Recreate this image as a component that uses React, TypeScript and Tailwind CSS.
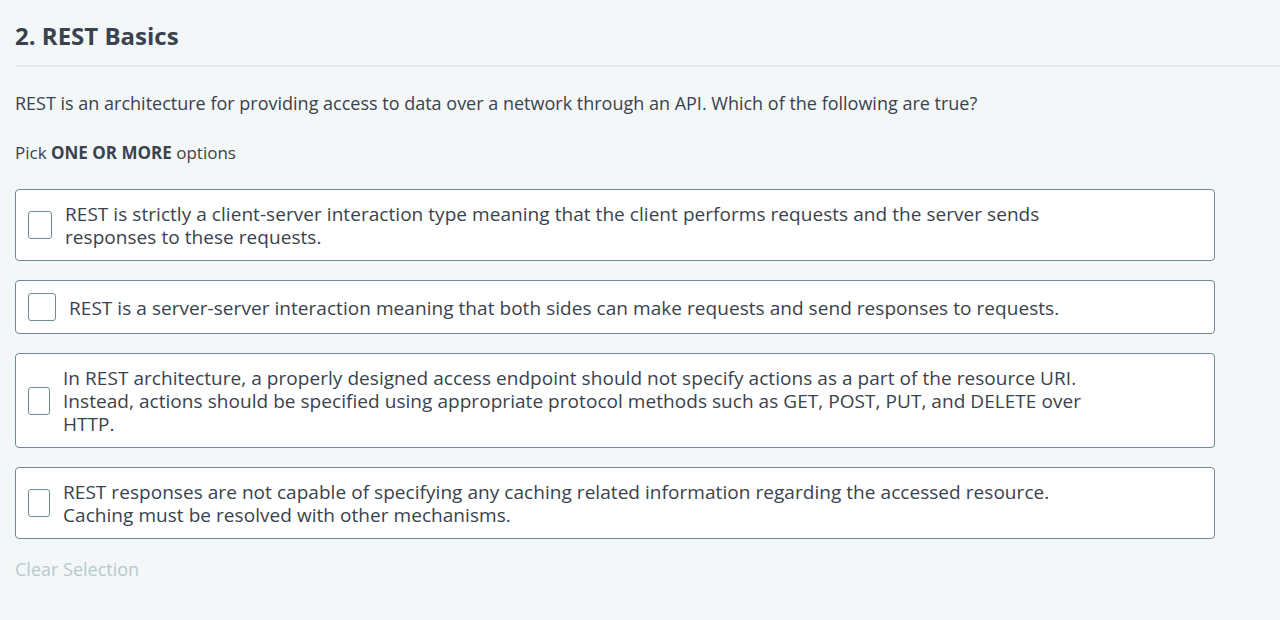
const OPTIONS = [
  {
    id: 'a',
    box: 'w-[24px]',
    text: 'REST is strictly a client-server interaction type meaning that the client performs requests and the server sends responses to these requests.',
  },
  {
    id: 'b',
    box: 'w-[28px]',
    text: 'REST is a server-server interaction meaning that both sides can make requests and send responses to requests.',
  },
  {
    id: 'c',
    box: 'w-[22px]',
    text: 'In REST architecture, a properly designed access endpoint should not specify actions as a part of the resource URI. Instead, actions should be specified using appropriate protocol methods such as GET, POST, PUT, and DELETE over HTTP.',
  },
  {
    id: 'd',
    box: 'w-[22px]',
    text: 'REST responses are not capable of specifying any caching related information regarding the accessed resource. Caching must be resolved with other mechanisms.',
  },
];

export default function App() {
  return (
    <div
      className="min-h-[620px] bg-[#f3f7f7] pl-[15px] text-[#39424e]"
      style={{ fontFamily: '"Open Sans", "Noto Sans", sans-serif' }}
    >
      <h2 className="pt-[20px] pb-[13px] text-[24px] font-bold leading-[32px]">2. REST Basics</h2>
      <div className="h-[2px] bg-[#e3ebec]" />

      <p className="mt-[23px] text-[18px] leading-[26px]">
        REST is an architecture for providing access to data over a network through an API. Which of the following are true?
      </p>
      <p className="mt-[24px] text-[17px] leading-[26px]">
        Pick <span className="font-bold">ONE OR MORE</span> options
      </p>

      <div className="mt-[23px] flex w-[1200px] flex-col gap-[19px]">
        {OPTIONS.map((o) => (
          <label
            key={o.id}
            className="flex cursor-pointer rounded-[4px] border border-[#6f8a91] bg-white py-[12px] pl-[12px]"
          >
            <div className="flex w-[1072px] items-center">
              <span
                className={`h-[28px] shrink-0 rounded-[3px] border border-[#6f8a91] bg-white ${o.box}`}
              />
              <span className="relative top-[1px] ml-[13px] text-[19px] leading-[23px] tracking-[0.05px]">{o.text}</span>
            </div>
          </label>
        ))}
      </div>

      <button className="mt-[18px] text-[18px] leading-[24px] text-[#b6cacd]">Clear Selection</button>
    </div>
  );
}
